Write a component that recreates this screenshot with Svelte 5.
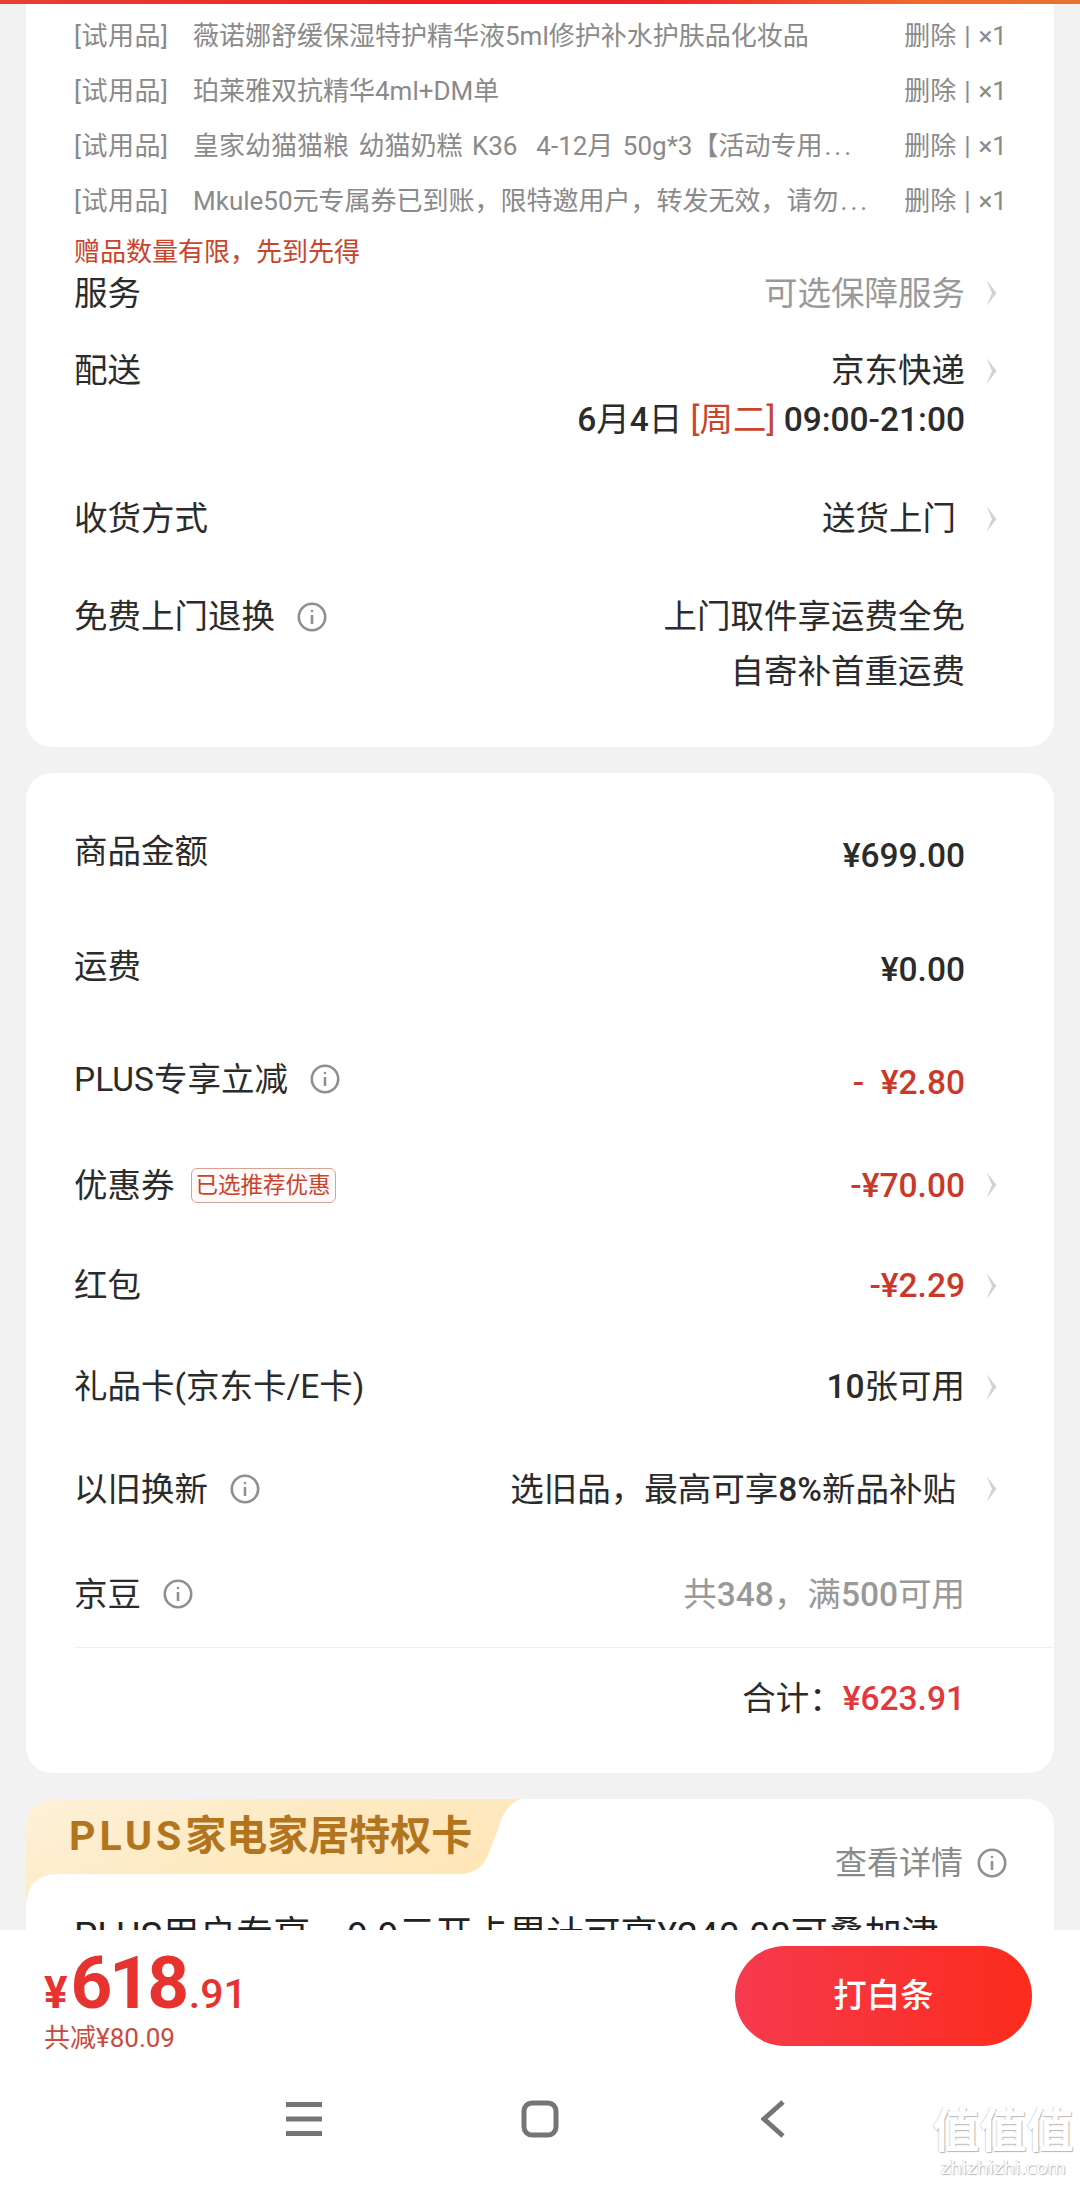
<script>
	const items = [
		{ name: '薇诺娜舒缓保湿特护精华液5ml修护补水护肤品化妆品' },
		{ name: '珀莱雅双抗精华4ml+DM单' },
		{ name: '皇家幼猫猫粮 幼猫奶糕 K36  4-12月 50g*3【活动专用', cut: true },
		{ name: 'Mkule50元专属券已到账，限特邀用户，转发无效，请勿', cut: true }
	];

	const fees = [
		{ label: '商品金额', h: 115, value: '¥699.00', low: true },
		{ label: '运费', h: 114, value: '¥0.00', low: true },
		{ label: 'PLUS专享立减', h: 112, info: true, value: '-  ¥2.80', kind: 'red', low: true },
		{ label: '优惠券', h: 100, tag: '已选推荐优惠', value: '-¥70.00', kind: 'red', more: true },
		{ label: '红包', h: 101, value: '-¥2.29', kind: 'red', more: true },
		{ label: '礼品卡(京东卡/E卡)', h: 101, value: '10张可用', more: true },
		{ label: '以旧换新', h: 104, info: true, value: '选旧品，最高可享8%新品补贴', kind: 'inset', more: true },
		{ label: '京豆', h: 106, info: true, value: '共348，满500可用', kind: 'muted' }
	];

	// digits sit a weight above the CJK around them
	const chunks = (text) => text.match(/[\x00-\x7f¥]+|[^\x00-\x7f¥]+/g);
	const isNum = (chunk) => /[0-9]/.test(chunk);
</script>

{#snippet chevron()}
	<svg class="chevron" viewBox="0 0 12 26" aria-hidden="true">
		<path d="M1.500 0 L11.500 13 L1.500 26 L7 13 Z" />
	</svg>
{/snippet}

{#snippet info()}
	<svg class="info" viewBox="0 0 30 30" aria-hidden="true">
		<circle cx="15" cy="15" r="13.200" />
		<path d="M15 13v9" />
		<circle class="dot" cx="15" cy="9" r="1.300" />
	</svg>
{/snippet}

{#snippet mixed(text)}
	{#each chunks(text) as chunk}<span class={isNum(chunk) ? 'digits' : ''}>{chunk}</span>{/each}
{/snippet}

<div class="page">
	<div class="topbar"></div>

	<section class="card first">
		<ul class="gifts">
			{#each items as item}
				<li>
					<span class="gift-tag">[试用品]</span>
					<span class="gift-name">{item.name}{#if item.cut}<span class="cut">...</span>{/if}</span>
					<span class="gift-ops">删除 | ×1</span>
				</li>
			{/each}
		</ul>
		<p class="note">赠品数量有限，先到先得</p>

		<div class="row svc top">
			<span>服务</span>
			<span class="end"><span class="muted">可选保障服务</span><span class="slot">{@render chevron()}</span></span>
		</div>
		<div class="row svc mt30">
			<span>配送</span>
			<span class="end">京东快递<span class="slot">{@render chevron()}</span></span>
		</div>
		<div class="row svc">
			<span></span>
			<span class="end">
				<span>{@render mixed('6月4日')} <span class="week">[周二]</span> <span class="digits">09:00-21:00</span></span>
				<span class="slot"></span>
			</span>
		</div>
		<div class="row svc mt50">
			<span>收货方式</span>
			<span class="end"><span class="inset">送货上门</span><span class="slot">{@render chevron()}</span></span>
		</div>
		<div class="row returns mt46">
			<span class="label">免费上门退换{@render info()}</span>
			<span class="end multi">
				<span>上门取件享运费全免<br />自寄补首重运费</span>
				<span class="slot"></span>
			</span>
		</div>
	</section>

	<section class="card fees">
		{#each fees as fee}
			<div class="row" style:height="{fee.h}px">
				<span class="label">{fee.label}{#if fee.info}{@render info()}{/if}{#if fee.tag}<span class="tag">{fee.tag}</span>{/if}</span>
				<span class="end">
					<span class={[fee.kind, fee.low && 'low']}>{@render mixed(fee.value)}</span>
					<span class="slot">{#if fee.more}{@render chevron()}{/if}</span>
				</span>
			</div>
		{/each}
		<div class="total">
			<span>合计：</span><span class="total-num">¥623.91</span>
		</div>
	</section>

	<section class="card plus">
		<svg class="plus-bg" viewBox="0 0 510 110" aria-hidden="true">
			<defs>
				<linearGradient id="gold" x1="0" y1="0" x2="1" y2="0.5">
					<stop offset="0" stop-color="#fdf1d9" />
					<stop offset="0.55" stop-color="#feeac2" />
					<stop offset="1" stop-color="#fee6b8" />
				</linearGradient>
			</defs>
			<path d="M0 110 V28 Q0 0 28 0 H495 Q478 6 472 30 L462 56 Q454 75 434 75 H32 Q0 75 0 110 Z" fill="url(#gold)" />
		</svg>
		<div class="plus-head">
			<span class="plus-title"><span class="plus-word">PLUS</span>家电家居特权卡</span>
			<span class="plus-more">查看详情{@render info()}</span>
		</div>
		<p class="plus-text">PLUS用户专享，9.9元开卡累计可享¥240.00可叠加津</p>
	</section>

	<footer class="bottom">
		<div class="pay">
			<div class="price">
				<div class="amount"><span class="yen">¥</span><span class="int">618</span><span class="dec">.91</span></div>
				<div class="saved">共减¥80.09</div>
			</div>
			<button type="button" class="pay-btn">打白条</button>
		</div>
		<nav class="softkeys" aria-label="系统导航">
			<svg width="36" height="34" viewBox="0 0 36 34" aria-hidden="true">
				<path d="M0 2.500h36M0 17h36M0 31.500h36" />
			</svg>
			<svg width="38" height="38" viewBox="0 0 38 38" aria-hidden="true">
				<rect x="3" y="3" width="32" height="32" rx="8" />
			</svg>
			<svg class="back" width="24" height="38" viewBox="0 0 24 38" aria-hidden="true">
				<path d="M22 2 L3 19 L22 36" />
			</svg>
		</nav>
		<div class="watermark">
			<div class="wm-mark">值值值</div>
			<div class="wm-url">zhizhizhi.com</div>
		</div>
	</footer>
</div>

<style>
	:global(body) {
		margin: 0;
		background: #f2f2f2;
	}

	.page {
		position: relative;
		height: 2185px;
		overflow: hidden;
		background: #f2f2f2;
		color: #2b2b2b;
		font: 33.500px/49px Roboto, 'Noto Sans CJK SC', sans-serif;
	}

	.topbar {
		height: 4px;
		background: linear-gradient(90deg, #e8412f 0%, #ef1f24 40%, #f0232a 60%, #ee6a2c 85%, #e8732f 100%);
	}

	.card {
		margin: 0 26px;
		background: #fff;
		border-radius: 26px;
	}

	.first {
		padding: 4px 0 48px;
		border-radius: 0 0 26px 26px;
	}

	.gifts {
		list-style: none;
		margin: 0;
		padding: 0 47px 0 48px;
	}

	.gifts li {
		display: flex;
		align-items: center;
		height: 55px;
		font-size: 26px;
		line-height: 36px;
		color: #8a8a8a;
	}

	.gift-tag {
		flex: none;
		width: 119px;
		letter-spacing: 0.5px;
	}

	.gift-name {
		flex: 1;
		min-width: 0;
		white-space: pre;
		overflow: hidden;
		word-spacing: 3px;
	}

	.cut {
		letter-spacing: 3px;
		margin-left: 2px;
	}

	.gift-ops {
		flex: none;
		white-space: pre;
		word-spacing: 1.500px;
	}

	.note {
		margin: 6px 48px 0;
		font-size: 26px;
		line-height: 36px;
		color: #c9442c;
	}

	.row {
		display: flex;
		justify-content: space-between;
		align-items: center;
		padding-left: 48px;
		padding-right: 55px;
	}

	.svc {
		height: 49px;
	}

	.svc.top {
		height: 46px;
	}

	.mt30 {
		margin-top: 30px;
	}

	.mt50 {
		margin-top: 50px;
	}

	.mt46 {
		margin-top: 46px;
	}

	.returns {
		align-items: flex-start;
		line-height: 55px;
	}

	.multi {
		text-align: right;
		align-items: flex-start;
	}

	.label {
		display: flex;
		align-items: center;
		white-space: nowrap;
	}

	.end {
		display: flex;
		align-items: center;
		white-space: pre;
	}

	.slot {
		flex: none;
		display: flex;
		justify-content: flex-end;
		width: 32px;
		margin-right: 2px;
	}

	.chevron {
		width: 12px;
		height: 26px;
		fill: #d2d2d2;
	}

	.info {
		flex: none;
		width: 30px;
		height: 30px;
		margin-left: 22px;
		fill: none;
		stroke: #8f8f8f;
		stroke-width: 2.600;
	}

	.info .dot {
		fill: #8f8f8f;
		stroke: none;
	}

	.muted {
		color: #999;
	}

	.inset {
		padding-right: 9px;
	}

	.digits {
		font-weight: 500;
	}

	.week {
		color: #c9442c;
	}

	.red {
		color: #c9392a;
	}

	.low {
		padding-top: 7px;
	}

	.tag {
		margin-left: 16px;
		padding: 0 4px;
		border: 1px solid #d9a394;
		border-radius: 6px;
		background: #fffafa;
		font-size: 22.500px;
		line-height: 33px;
		color: #c9442c;
	}

	.fees {
		margin-top: 26px;
		padding-top: 21px;
	}

	.total {
		display: flex;
		justify-content: flex-end;
		align-items: center;
		height: 100px;
		margin-left: 48px;
		padding: 0 89px 25px 0;
		border-top: 1px solid #efefef;
	}

	.total-num {
		font-weight: 500;
		color: #e2383c;
	}

	.plus {
		position: relative;
		height: 400px;
		margin-top: 26px;
		overflow: hidden;
	}

	.plus-bg {
		position: absolute;
		top: 0;
		left: 0;
		width: 510px;
		height: 110px;
	}

	.plus-head {
		position: relative;
		display: flex;
		justify-content: space-between;
		height: 75px;
		padding: 0 47px 0 43px;
	}

	.plus-title {
		margin-top: 12px;
		font-size: 41px;
		line-height: 50px;
		font-weight: 700;
		color: #b3741e;
	}

	.plus-word {
		letter-spacing: 4px;
	}

	.plus-more {
		display: flex;
		align-items: center;
		margin-top: 40px;
		height: 48px;
		font-size: 32px;
		color: #8a8a8a;
	}

	.plus-more .info {
		margin-left: 14px;
	}

	.plus-text {
		position: relative;
		margin: 37px 48px 0;
		font-size: 37px;
		line-height: 50px;
		white-space: nowrap;
		color: #222;
	}

	.bottom {
		position: absolute;
		left: 0;
		right: 0;
		bottom: 0;
		height: 255px;
		background: #fff;
	}

	.pay {
		display: flex;
		justify-content: space-between;
		align-items: flex-start;
		padding: 16px 48px 0 44px;
	}

	.amount {
		height: 74px;
		line-height: 74px;
		color: #e6332f;
		font-weight: 700;
		white-space: nowrap;
	}

	.yen {
		font-size: 44px;
		margin-right: 3px;
	}

	.int {
		font-size: 73px;
		letter-spacing: -3.500px;
	}

	.dec {
		font-size: 41px;
		font-weight: 500;
		margin-left: 3px;
	}

	.saved {
		font-size: 26px;
		line-height: 36px;
		color: #c94a40;
	}

	.pay-btn {
		width: 297px;
		height: 100px;
		border: 0;
		border-radius: 50px;
		background: linear-gradient(90deg, #f63a4e, #fb2c1c);
		color: #fff;
		font: 500 33.500px/1 Roboto, 'Noto Sans CJK SC', sans-serif;
	}

	.softkeys {
		position: absolute;
		top: 170px;
		left: 286px;
		display: flex;
		align-items: center;
		gap: 199px;
	}

	.softkeys svg {
		fill: none;
		stroke: #757575;
		stroke-width: 5;
	}

	.softkeys .back {
		margin-left: 3px;
	}

	.watermark {
		position: absolute;
		left: 932px;
		top: 172px;
		width: 142px;
		color: #fff;
		text-align: center;
		font-family: 'DejaVu Sans', 'Noto Sans CJK SC', sans-serif;
		text-shadow: 1px 1px 1px #b5b5b5, -1px 0 1px #dcdcdc;
	}

	.wm-mark {
		font-size: 47px;
		line-height: 50px;
		font-weight: 700;
		font-family: 'Noto Sans CJK SC', sans-serif;
	}

	.wm-url {
		font-size: 18.500px;
		line-height: 22px;
		margin-top: 5px;
	}
</style>
